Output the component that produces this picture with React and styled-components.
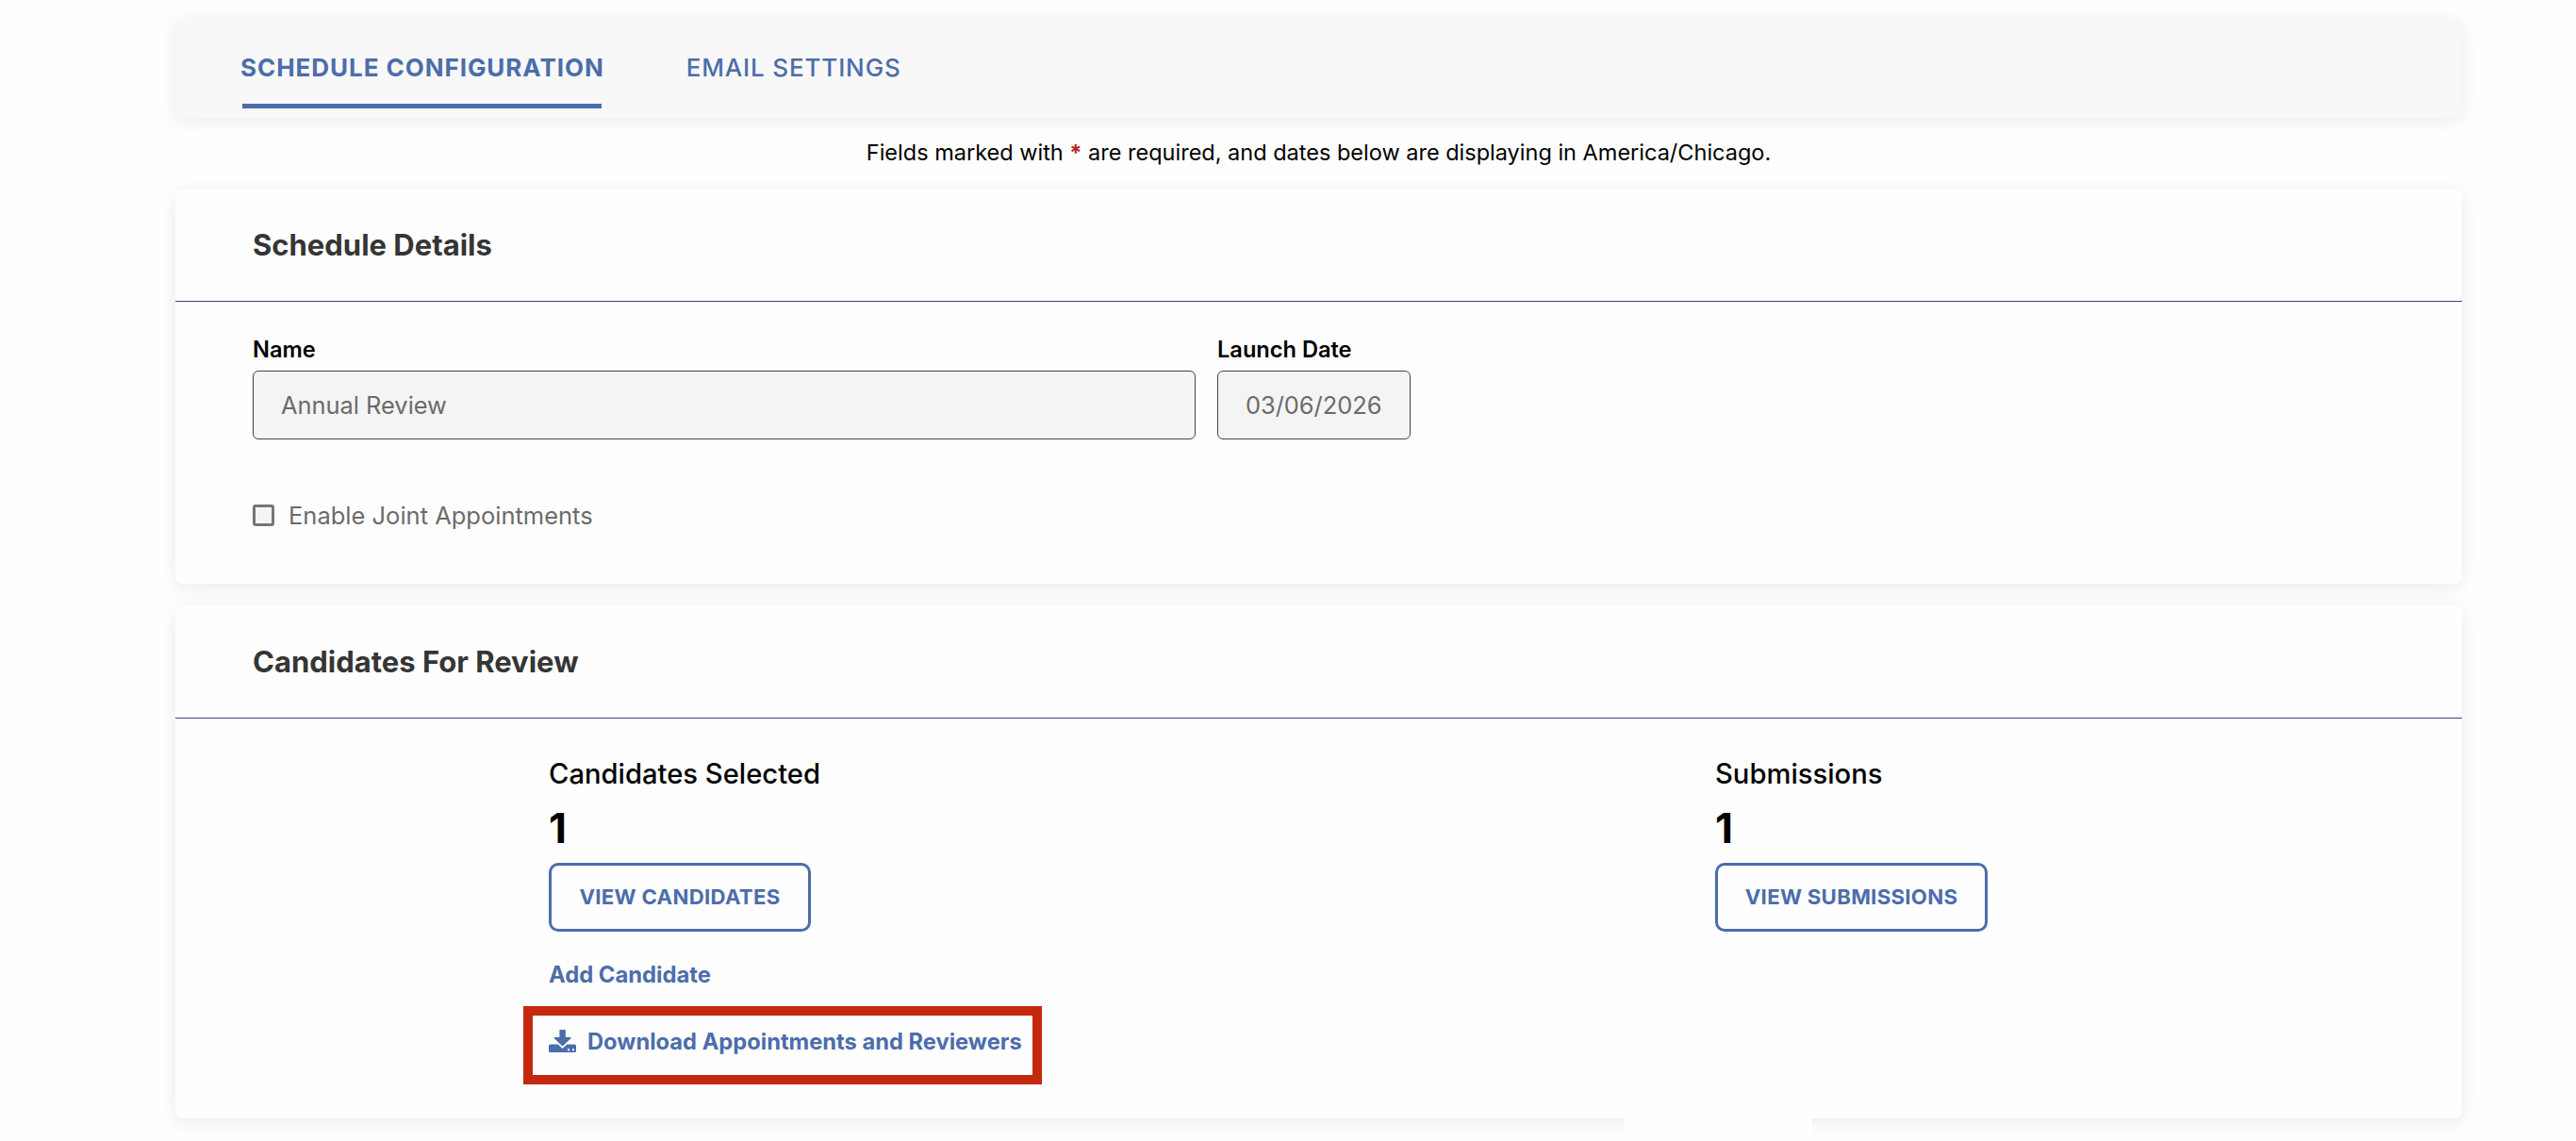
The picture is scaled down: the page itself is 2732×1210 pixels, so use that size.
import styled, { createGlobalStyle } from "styled-components";

const GlobalStyle = createGlobalStyle`
  * {
    box-sizing: border-box;
  }

  body {
    margin: 0;
    background-color: #fefefe;
    color: #000;
    font-family: Inter, "Liberation Sans", sans-serif;
  }
`;

const Page = styled.main`
  width: 2732px;
  height: 1210px;
  overflow: hidden;
  padding: 20px 121px 0 186px;
`;

const TabBar = styled.nav`
  display: flex;
  align-items: stretch;
  gap: 87px;
  height: 104px;
  padding: 0 69px;
  border-radius: 8px;
  background-color: #f8f8f8;
  box-shadow: 0 4px 20px rgba(0, 0, 0, 0.08);
`;

const Tab = styled.a`
  display: flex;
  flex-direction: column;
  color: #4c6dab;
  font-size: 26px;
  font-weight: ${({ $active }) => ($active ? 700 : 500)};
  line-height: 90px;
  letter-spacing: ${({ $active }) => ($active ? 0.95 : 0.85)}px;
  padding-top: 7px;

  &::after {
    content: "";
    height: 5px;
    width: 381px;
    margin: -7px 0 0 2px;
    display: ${({ $active }) => ($active ? "block" : "none")};
    background-color: #4c6dab;
  }
`;

const RequiredNote = styled.p`
  height: 76px;
  margin: 0;
  font-size: 23.5px;
  line-height: 75px;
  text-align: center;

  span {
    color: #b3261e;
    font-weight: 700;
  }
`;

const Card = styled.section`
  position: relative;
  height: ${({ $height }) => $height}px;
  margin-bottom: 23px;
  border-radius: 8px;
  background-color: #fefefe;
  box-shadow: 0 4px 20px rgba(0, 0, 0, 0.08);
`;

const CardTitle = styled.h2`
  height: 120px;
  margin: 0;
  padding-left: 82px;
  border-bottom: 1px solid #334a72;
  color: #353535;
  font-size: 31px;
  font-weight: 700;
  line-height: 119px;
`;

const Fields = styled.div`
  display: flex;
  gap: 23px;
  padding: 33px 82px 0;
`;

const Field = styled.label`
  display: flex;
  flex-direction: column;
  width: ${({ $width }) => $width}px;
  font-size: 23.6px;
  font-weight: 600;
  line-height: 36px;
`;

const Input = styled.input`
  height: 73px;
  margin-top: 4px;
  padding: 0 29px 1px;
  border: 1px solid #444;
  border-radius: 6px;
  background-color: #f4f4f4;
  color: #6b6b6b;
  -webkit-text-fill-color: #6b6b6b;
  font-family: inherit;
  font-size: 25.4px;
  opacity: 1;
`;

const CheckboxRow = styled.label`
  display: flex;
  align-items: center;
  gap: 15px;
  height: 40px;
  margin: 60px 0 0 82px;
  color: #6b6b6b;
  font-size: 25.5px;
`;

const Checkbox = styled.input`
  appearance: none;
  width: 23px;
  height: 23px;
  margin: 0;
  border: 3px solid #767676;
  border-radius: 3px;
  background-color: #f4f4f4;
`;

const Stats = styled.div`
  display: grid;
  grid-template-columns: 1237px 1fr;
  padding: 40px 0 0 396px;
`;

const Stat = styled.div`
  display: flex;
  flex-direction: column;
  align-items: flex-start;
`;

const StatLabel = styled.span`
  font-size: 29.2px;
  font-weight: 500;
  line-height: 37px;
`;

const StatValue = styled.strong`
  margin-top: 12px;
  font-size: 44px;
  font-weight: 700;
  line-height: 54px;
`;

const Button = styled.button`
  width: ${({ $width }) => $width}px;
  height: 73px;
  margin-top: 10px;
  padding: 0 0 2px;
  border: 3px solid #4c6dab;
  border-radius: 10px;
  background: transparent;
  color: #4c6dab;
  font-family: inherit;
  font-size: 22.2px;
  font-weight: 700;
  letter-spacing: 0.3px;
`;

const Link = styled.a`
  display: flex;
  align-items: center;
  gap: 12px;
  color: #4c6dab;
  font-size: 23.8px;
  font-weight: 700;
  line-height: 36px;

  svg {
    flex-shrink: 0;
    margin-top: -2px;
  }
`;

const AddLink = styled(Link)`
  margin-top: 28px;
`;

const Highlight = styled.div`
  width: 550px;
  height: 83px;
  margin: 15px 0 0 -27px;
  padding: 10px 17px;
  border: 10px solid #c4280d;

  ${Link} {
    font-size: 23.7px;
    white-space: nowrap;
  }
`;

// covers the card shadow below the submissions column
const ShadowCover = styled.div`
  position: absolute;
  top: 100%;
  left: 1536px;
  width: 200px;
  height: 24px;
  background-color: #fefefe;
`;

function DownloadIcon() {
  return (
    <svg width="29" height="24" viewBox="0 0 29 24" fill="currentColor">
      <path d="M11.4 0h6.4v8H23q1.2.2.4 1.2l-8.8 8.3-8.8-8.3Q5 8.2 6.2 8h5.2z" />
      <path
        fillRule="evenodd"
        d="M1.5 15.5h8.2l4.9 4.6 4.900-4.6h8q1.500 0 1.500 1.500v5.500q0 1.500-1.500 1.500h-26Q0 24 0 22.500V17q0-1.500 1.500-1.500zM20 20.300v2h2v-2zM25 20.300v2h2v-2z"
      />
    </svg>
  );
}

export default function App() {
  return (
    <>
      <GlobalStyle />
      <Page>
        <TabBar>
          <Tab $active>SCHEDULE CONFIGURATION</Tab>
          <Tab>EMAIL SETTINGS</Tab>
        </TabBar>
        <RequiredNote>
          Fields marked with <span>*</span> are required, and dates below are
          displaying in America/Chicago.
        </RequiredNote>

        <Card $height={419}>
          <CardTitle>Schedule Details</CardTitle>
          <Fields>
            <Field $width={1000}>
              Name
              <Input value="Annual Review" disabled />
            </Field>
            <Field $width={205}>
              Launch Date
              <Input value="03/06/2026" disabled />
            </Field>
          </Fields>
          <CheckboxRow>
            <Checkbox type="checkbox" disabled />
            Enable Joint Appointments
          </CheckboxRow>
        </Card>

        <Card $height={544}>
          <CardTitle>Candidates For Review</CardTitle>
          <Stats>
            <Stat>
              <StatLabel>Candidates Selected</StatLabel>
              <StatValue>1</StatValue>
              <Button $width={278}>VIEW CANDIDATES</Button>
              <AddLink>Add Candidate</AddLink>
              <Highlight>
                <Link>
                  <DownloadIcon />
                  Download Appointments and Reviewers
                </Link>
              </Highlight>
            </Stat>
            <Stat>
              <StatLabel>Submissions</StatLabel>
              <StatValue>1</StatValue>
              <Button $width={289}>VIEW SUBMISSIONS</Button>
            </Stat>
          </Stats>
          <ShadowCover />
        </Card>
      </Page>
    </>
  );
}
